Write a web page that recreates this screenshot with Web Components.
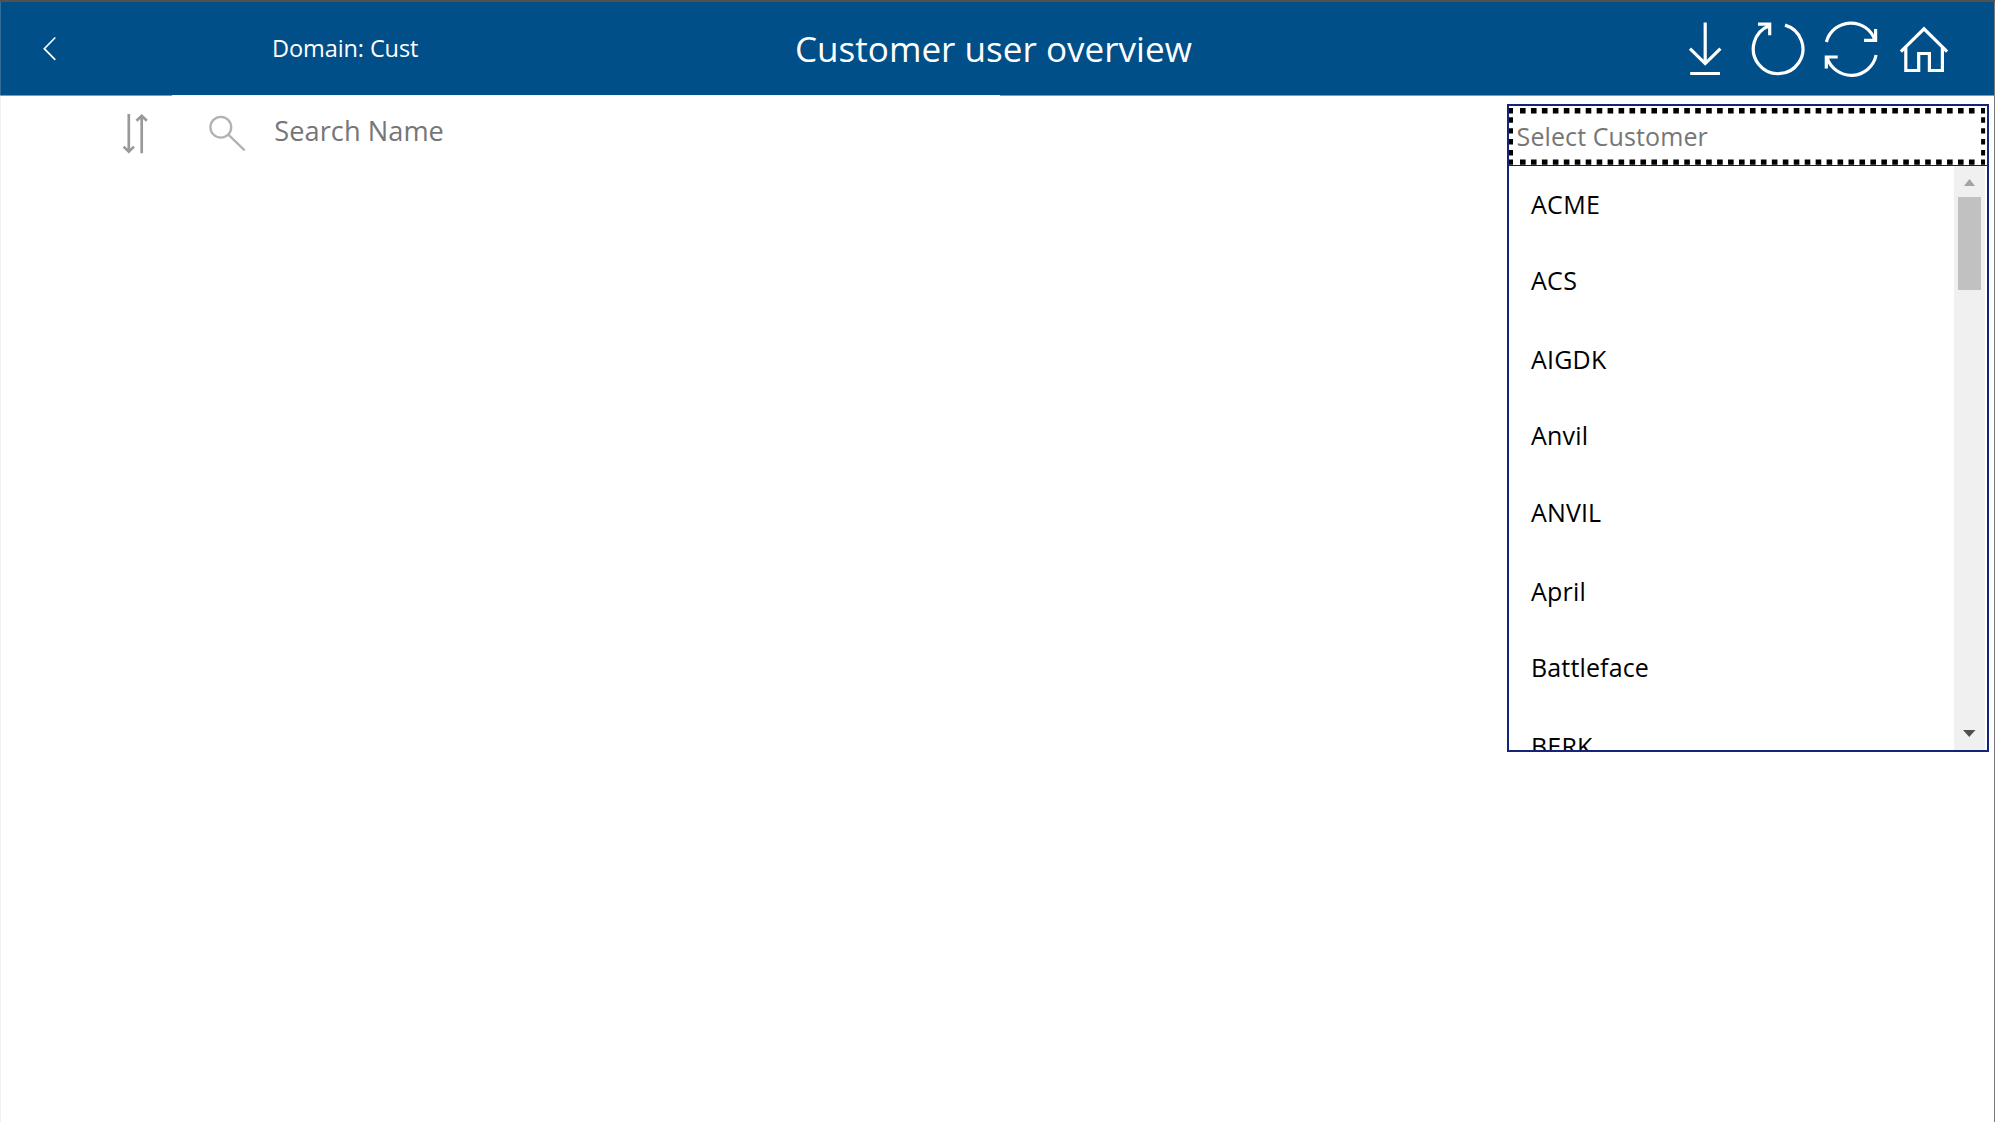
<!DOCTYPE html>
<html lang="en">
<head>
<meta charset="utf-8">
<title>Customer user overview</title>
<style>
html,body{margin:0;height:100%;overflow:hidden;background:#fff}
body{font-family:"Open Sans","Noto Sans",sans-serif}
</style>
</head>
<body>
<user-overview></user-overview>
<script>
const define = (name, html) => customElements.define(name, class extends HTMLElement {
  constructor() {
    super();
    const t = document.createElement('template');
    t.innerHTML = html;
    this.attachShadow({ mode: 'open' }).append(t.content.cloneNode(true));
  }
});

define('app-header', `
<style>
:host{display:flex;box-sizing:border-box;height:96px;border-top:2px solid #505153;background:linear-gradient(#0a4f80,#004f88 2px);color:#fff;position:relative}
.back{width:272px;flex:none}
.domain{width:523px;flex:none;font-size:23.5px;letter-spacing:-.09px;white-space:nowrap}
.title{flex:1;font-size:35.1px;white-space:nowrap}
.domain span,.title span{display:block;height:94px}
.domain span{line-height:92px}
.title span{line-height:93px}
.actions{flex:none;width:311px;height:94px}
svg{display:block;fill:none;stroke:#fff}
.edge{position:absolute;left:0;right:0;bottom:0;height:1px;background:linear-gradient(90deg,#6f9fc0 172px,#eef4f8 172px,#eef4f8 1000px,#6f9fc0 1000px)}
</style>
<div class="back"><svg width="272" height="94" viewBox="0 2 272 94" stroke-width="1.7"><path d="M55.3 37.5 44.3 48.7 55.3 59.8"/></svg></div>
<div class="domain"><span>Domain: Cust</span></div>
<div class="title"><span>Customer user overview</span></div>
<div class="actions"><svg width="311" height="94" viewBox="1684 2 311 94" stroke-width="3.2">
<path d="M1705.2 22.5V64M1690 48.7 1705.2 63.6 1720.4 48.7M1690.2 73.5H1720"/>
<path d="M1785 25.1A24.8 24.8 0 1 1 1769.4 25.7M1758 24.2H1769.7V35.3"/>
<path d="M1826.4 42A25.4 25.4 0 0 1 1875 40.2M1864 40.4H1875.6V29M1876.1 55A25.4 25.4 0 0 1 1827 57.6M1837.7 57H1826.3V68.6"/>
<path d="M1900.9 51.6 1924 28.8 1947.1 51.6M1905.8 47.5V70.5H1918.7V53.5H1929.4V70.5H1942.4V47.5"/>
</svg></div>
<div class="edge"></div>`);

define('search-bar', `
<style>
:host{display:flex;flex:1;height:70px}
svg{flex:none;display:block;fill:none}
span{font-size:27.2px;line-height:36px;letter-spacing:.04px;color:#767676;padding-top:17px;white-space:nowrap}
</style>
<svg width="274.3" height="70" viewBox="0 96 274.3 70">
<path d="M128.8 114V151.5M123.6 146.6 128.8 151.6 134 146.6M141.7 153.3V116M136.5 120.8 141.7 115.8 146.9 120.8" stroke="#999" stroke-width="2.7"/>
<g stroke="#b2b2b2" stroke-width="2.3"><circle cx="220.8" cy="127.2" r="10.4"/><path d="M228.3 134.6 244.7 150.4"/></g>
</svg><span><slot></slot></span>`);

define('list-item', `
<style>
:host{display:block;flex:none;height:var(--h,77px);font-size:25px;line-height:34px;letter-spacing:var(--ls,0);white-space:nowrap;color:#000}
</style><slot></slot>`);

define('scroll-bar', `
<style>
:host{display:flex;flex:none;flex-direction:column;align-items:center;width:31px;background:#f0f0f0}
svg{flex:none;display:block}
.thumb{width:23px;height:93px;background:#c1c1c1}
.track{flex:1}
</style>
<svg width="31" height="31"><path d="M10 20 15.5 13 21 20Z" fill="#a3a3a3"/></svg>
<div class="thumb"></div><div class="track"></div>
<svg width="31" height="31"><path d="M9 11H21.5L15.2 18Z" fill="#505050"/></svg>`);

define('customer-picker', `
<style>
:host{display:flex;flex-direction:column;flex:none;box-sizing:border-box;width:482px;height:648px;margin:8px 6px 0 0;border:2px solid #16237a;background:#fff}
.field{position:relative;flex:none;box-sizing:border-box;height:60px;border-bottom:1px solid #0a1678;font-size:25px;line-height:34px;letter-spacing:.1px;color:#767676;padding:13px 0 0 7.6px;white-space:nowrap}
.field svg{position:absolute;left:0;top:0;fill:none;stroke:#000}
.body{flex:1;min-height:0;display:flex;margin-right:2px}
.list{flex:1;display:flex;flex-direction:column;overflow:hidden;padding:21px 0 0 22px}
</style>
<div class="field"><slot name="placeholder"></slot>
<svg width="478" height="60" viewBox="1509 106 478 60">
<path d="M1520 110.8H1977M1520 162.1H1977" stroke-width="5.4" stroke-dasharray="5.6 5.35"/>
<path d="M1511 117.3V158M1983.1 117.3V158" stroke-width="4" stroke-dasharray="5.4 5.5"/>
<path d="M1509 110.8H1513M1981 110.8H1985M1509 162.1H1513M1981 162.1H1985" stroke-width="5.4"/>
</svg></div>
<div class="body"><div class="list"><slot></slot></div><scroll-bar></scroll-bar></div>`);

define('user-overview', `
<style>
:host{display:flex;flex-direction:column;height:100vh;position:relative}
main{display:flex;flex:1;align-items:flex-start}
.left,.right{position:absolute;top:2px;bottom:0;width:1px}
.left{left:0;background:rgba(200,200,200,.25)}
.right{right:0;background:#77797b}
</style>
<app-header></app-header>
<main>
<search-bar>Search Name</search-bar>
<customer-picker>
<span slot="placeholder">Select Customer</span>
<list-item style="--h:76px;--ls:.3px">ACME</list-item>
<list-item style="--h:79px;--ls:.3px">ACS</list-item>
<list-item style="--h:76px;--ls:.2px">AIGDK</list-item>
<list-item style="--h:77px;--ls:.2px">Anvil</list-item>
<list-item style="--h:79px;--ls:.15px">ANVIL</list-item>
<list-item style="--h:76px;--ls:.2px">April</list-item>
<list-item style="--h:79px;--ls:.15px">Battleface</list-item>
<list-item style="--ls:.2px">BERK</list-item>
</customer-picker>
</main>
<div class="left"></div><div class="right"></div>`);
</script>
</body>
</html>
